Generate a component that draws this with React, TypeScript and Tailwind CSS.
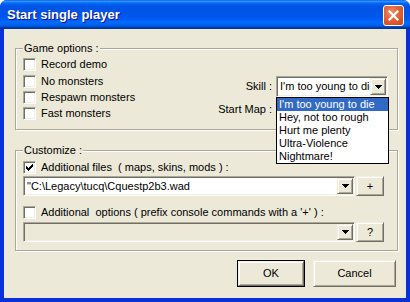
import React from "react";

const sunken =
  "border border-t-[#ACA899] border-l-[#ACA899] border-r-white border-b-white shadow-[inset_1px_1px_0_#716F64,inset_-1px_-1px_0_#F1EFE2]";
const raised =
  "border border-t-[#F1EFE2] border-l-[#F1EFE2] border-r-[#716F64] border-b-[#716F64] shadow-[inset_1px_1px_0_#fff,inset_-1px_-1px_0_#ACA899] bg-[#ECE9D8]";

function Check({ checked }: { checked?: boolean }) {
  return (
    <div className={`w-[13px] h-[13px] shrink-0 bg-white relative ${sunken}`}>
      {checked && (
        <svg width="7" height="7" viewBox="0 0 7 7" className="absolute left-[2px] top-[2px]" shapeRendering="crispEdges">
          <path d="M0 2h1v3H0zM1 3h1v3H1zM2 4h1v3H2zM3 3h1v3H3zM4 2h1v3H4zM5 1h1v3H5zM6 0h1v3H6z" fill="#000" />
        </svg>
      )}
    </div>
  );
}

function CheckRow({ label, checked }: { label: string; checked?: boolean }) {
  return (
    <div className="flex items-center h-[13px] gap-[5px] whitespace-pre">
      <Check checked={checked} />
      <span className="leading-[13px]">{label}</span>
    </div>
  );
}

function Arrow() {
  return (
    <div className={`w-[16px] h-full shrink-0 flex items-center justify-center ${raised}`}>
      <svg width="7" height="4" viewBox="0 0 7 4" shapeRendering="crispEdges">
        <path d="M0 0h7v1H0zM1 1h5v1H1zM2 2h3v1H2zM3 3h1v1H3z" fill="#000" />
      </svg>
    </div>
  );
}

function Combo({ text, disabled, className }: { text?: string; disabled?: boolean; className?: string }) {
  return (
    <div className={`flex p-[1px] ${sunken} ${disabled ? "bg-[#ECE9D8]" : "bg-white"} ${className ?? ""}`}>
      <div className="flex-1 min-w-0 overflow-hidden whitespace-nowrap pl-[2px] flex items-center leading-[13px]">
        {text}
      </div>
      <Arrow />
    </div>
  );
}

function Legend({ children }: { children: React.ReactNode }) {
  return <legend className="px-[1px] leading-[13px] bg-[#ECE9D8]">{children}</legend>;
}

const fieldsetCls =
  "border border-[#ACA899] shadow-[inset_1px_1px_0_#fff,1px_1px_0_#fff] min-w-0";

export default function App() {
  const skills = ["I'm too young to die", "Hey, not too rough", "Hurt me plenty", "Ultra-Violence", "Nightmare!"];
  return (
    <div className="w-[410px] h-[302px] bg-white font-['Liberation_Sans',Arial,sans-serif] text-[11px] text-black">
      <div className="w-full h-full flex flex-col rounded-t-[7px] overflow-hidden bg-[#0831D9]">
        {/* Title bar */}
        <div className="h-[29px] shrink-0 flex justify-between pl-[7px] pr-[6px] bg-[linear-gradient(to_bottom,#0058EE_0%,#3A93FF_4%,#288EFF_6%,#127DFF_8%,#036FFC_10%,#0262EE_14%,#0057E5_20%,#0054E3_24%,#0055EB_56%,#005BF5_66%,#026AFE_76%,#0062EF_86%,#0052D6_92%,#0040AB_94%,#003092_100%)]">
          <div className="flex items-center pt-[1px] text-white font-bold text-[13px] [text-shadow:1px_1px_#0F1089] whitespace-nowrap">
            Start single player
          </div>
          <div className="mt-[5px] w-[21px] h-[21px] rounded-[3px] border border-white bg-[radial-gradient(circle_at_40%_35%,#F0906A_0%,#E2623A_45%,#C8431B_100%)] flex items-center justify-center">
            <svg width="11" height="11" viewBox="0 0 11 11">
              <path d="M1.5 1.5L9.5 9.5M9.5 1.5L1.5 9.5" stroke="#fff" strokeWidth="2.2" strokeLinecap="square" />
            </svg>
          </div>
        </div>

        {/* Client area */}
        <div className="flex-1 mx-[4px] mb-[4px] bg-[#ECE9D8] flex flex-col pl-[11px] pr-[8px] pt-[13px]">
          {/* Game options */}
          <fieldset className={`${fieldsetCls} pl-[7px] pr-[9px] pb-[9px]`}>
            <Legend>Game options :</Legend>
            <div className="flex justify-between">
              <div className="flex flex-col pt-[3px] gap-[3px]">
                <div className="mb-[1px]">
                  <CheckRow label="Record demo" />
                </div>
                <CheckRow label="No monsters" />
                <CheckRow label="Respawn monsters" />
                <CheckRow label="Fast monsters" />
              </div>
              <div className="grid grid-cols-[auto_112px] gap-x-[4px] gap-y-[2px] items-center mt-[21px]">
                <span className="justify-self-end whitespace-nowrap">Skill :</span>
                <div className="relative">
                  <Combo text="I'm too young to die" className="h-[21px]" />
                  <div className="absolute left-0 top-full w-[113px] bg-white border border-black z-10">
                    {skills.map((s, i) => (
                      <div
                        key={s}
                        className={`h-[13px] leading-[13px] pl-[2px] whitespace-nowrap ${i === 0 ? "bg-[#316AC5] text-white" : ""}`}
                      >
                        {s}
                      </div>
                    ))}
                  </div>
                </div>
                <span className="justify-self-end whitespace-nowrap">Start Map :</span>
                <Combo text="" className="h-[21px]" />
              </div>
            </div>
          </fieldset>

          {/* Customize */}
          <fieldset className={`${fieldsetCls} mt-[14px] pl-[7px] pr-[13px] pt-[4px] pb-[8px]`}>
            <Legend>Customize :</Legend>
            <CheckRow label="Additional files  ( maps, skins, mods ) :" checked />
            <div className="flex gap-[1px] mt-[2px] h-[20px]">
              <Combo text={'"C:\\Legacy\\tucq\\Cquestp2b3.wad'} className="flex-1" />
              <div className={`w-[28px] flex items-center justify-center ${raised}`}>+</div>
            </div>
            <div className="mt-[10px]">
              <CheckRow label="Additional  options ( prefix console commands with a '+' ) :" />
            </div>
            <div className="flex gap-[1px] mt-[3px] h-[20px]">
              <Combo text="" disabled className="flex-1" />
              <div className={`w-[28px] flex items-center justify-center ${raised}`}>?</div>
            </div>
          </fieldset>

          {/* Buttons */}
          <div className="flex justify-end gap-[8px] mt-[9px] mr-[2px]">
            <div className="w-[68px] h-[27px] border border-black flex">
              <div className={`flex-1 flex items-center justify-center ${raised}`}>OK</div>
            </div>
            <div className={`w-[83px] h-[27px] flex items-center justify-center ${raised}`}>Cancel</div>
          </div>
        </div>
      </div>
    </div>
  );
}
